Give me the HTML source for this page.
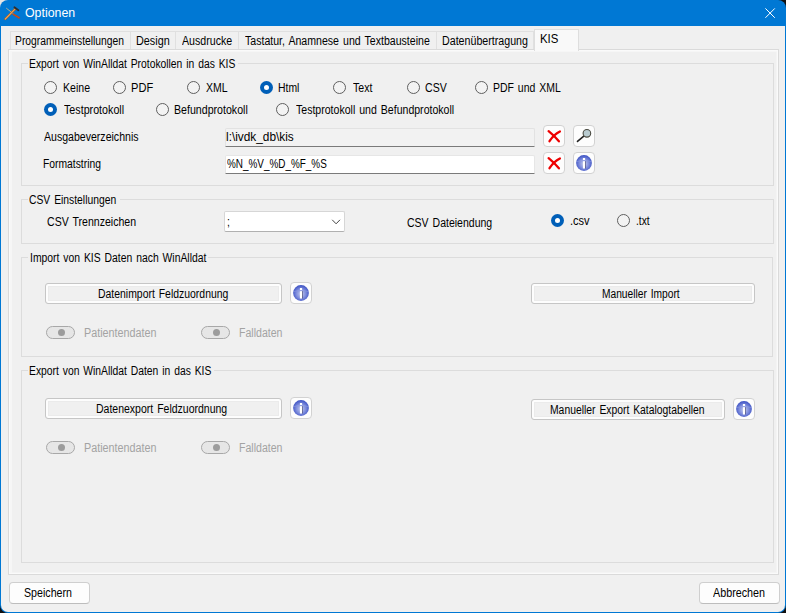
<!DOCTYPE html>
<html><head><meta charset="utf-8">
<style>
*{box-sizing:border-box;margin:0;padding:0}
html,body{width:786px;height:613px;overflow:hidden;background:#111}
body{position:relative;font-family:"Liberation Sans",sans-serif;font-size:12px;color:#000}
.a{position:absolute}
#win{left:0;top:0;width:786px;height:613px;background:#0078d4;border-radius:8px;overflow:hidden}
#client{left:1px;top:26px;width:784px;height:586px;background:#f0f0f0;border-radius:0 0 7px 7px}
.t{position:absolute;white-space:nowrap;line-height:14px;font-size:12px;word-spacing:1.2px;transform-origin:0 0}
.dis{color:#a3a3a3}
.w{color:#fff}
.gb{position:absolute;border:1px solid #dcdcdc}
.lg{position:absolute;background:#f0f0f0;height:3px}
.r{position:absolute;width:13px;height:13px;border-radius:50%;border:1px solid #5f5f5f;background:#f3f3f3}
.rc{position:absolute;width:13px;height:13px;border-radius:50%;background:#005fb8}
.rc:after{content:"";position:absolute;left:4px;top:4px;width:5px;height:5px;border-radius:50%;background:#fff}
.btn{position:absolute;border:1px solid #c6c6c6;border-radius:3px;background:#f0f0f0;box-shadow:inset 0 0 0 2px #fdfdfd, inset 0 0 0 3px #ebebeb}
.ib{position:absolute;width:22px;height:22px;border:1px solid #d2d2d2;border-radius:4px;background:#fdfdfd}
.ib svg{position:absolute;left:-1px;top:-1px}
.pb{position:absolute;border:1px solid #cfcfcf;border-radius:4px;background:#fdfdfd;border-bottom-color:#bdbdbd}
.tg{position:absolute;width:29px;height:13px;border:1px solid #a8a8a8;border-radius:7px;background:#e6e6e6}
.tg:after{content:"";position:absolute;left:11px;top:2px;width:7px;height:7px;border-radius:50%;background:#9c9c9c}
.tab{position:absolute;top:31px;height:19px;border:1px solid #e0e0e0;border-bottom:none;background:#f0f0f0}
</style></head><body>
<div class="a" style="left:0;top:0;width:12px;height:12px;background:#e6e6e6"></div>
<div id="win" class="a">
<svg class="a" style="left:4px;top:6px" width="17" height="15" viewBox="0 0 17 15">
  <line x1="2.2" y1="2.1" x2="9.6" y2="7.9" stroke="#c2b48f" stroke-width="0.9"/>
  <path d="M9.2 7.6L15.8 11.4L15.2 12.6L8.6 8.6Z" fill="#e0500e" stroke="#c04008" stroke-width="0.5" stroke-linejoin="round"/>
  <line x1="1.3" y1="13" x2="11" y2="3.2" stroke="#9a5a20" stroke-width="2.3" stroke-linecap="round"/>
  <line x1="1.3" y1="13" x2="11" y2="3.2" stroke="#eda35a" stroke-width="1.2" stroke-linecap="round"/>
  <line x1="10.4" y1="1.2" x2="14.4" y2="4.2" stroke="#2e2e2e" stroke-width="1.8" stroke-linecap="round"/>
</svg>
<svg class="a" style="left:765px;top:8px" width="11" height="11" viewBox="0 0 11 11">
  <path d="M0.4 0.4L9.8 9.8M9.8 0.4L0.4 9.8" stroke="#fff" stroke-width="1"/>
</svg>
<div id="client" class="a"></div>

<!-- tabs -->
<div class="tab" style="left:10px;width:121px"></div>
<div class="tab" style="left:130px;width:46px"></div>
<div class="tab" style="left:175px;width:64px"></div>
<div class="tab" style="left:238px;width:199px"></div>
<div class="tab" style="left:436px;width:98px"></div>
<div class="a" style="left:8px;top:49px;width:771px;height:526px;border:1px solid #dadada;background:#f0f0f0;box-shadow:inset 1px 1px 0 #fafafa, inset -1px -1px 0 #fafafa, inset 3px 2px 0 #f6f6f6, inset -2px -2px 0 #f4f4f4"></div>
<div class="a" style="left:534px;top:29px;width:45px;height:22px;border:1px solid #dedede;border-bottom:none;background:#f9f9f9"></div>

<!-- group 1 -->
<div class="gb" style="left:21px;top:63px;width:753px;height:123px"></div>
<div class="lg" style="left:28px;top:62px;width:210px"></div>
<div class="r" style="left:44px;top:81px"></div>
<div class="r" style="left:113px;top:81px"></div>
<div class="r" style="left:187px;top:81px"></div>
<div class="rc" style="left:260px;top:81px"></div>
<div class="r" style="left:333px;top:81px"></div>
<div class="r" style="left:407px;top:81px"></div>
<div class="r" style="left:475px;top:81px"></div>
<div class="rc" style="left:44px;top:103px"></div>
<div class="r" style="left:156px;top:103px"></div>
<div class="r" style="left:276px;top:103px"></div>

<div class="a" style="left:225px;top:128px;width:310px;height:19px;background:#f2f2f2;border:1px solid #e2e2e2;border-bottom:1px solid #7a7a7a;border-radius:2px 2px 0 0"></div>
<div class="a" style="left:225px;top:155px;width:310px;height:19px;background:#fff;border:1px solid #e6e6e6;border-bottom:1px solid #7a7a7a;border-radius:2px 2px 0 0"></div>

<div class="ib" style="left:543px;top:125px"><svg width="22" height="22" viewBox="0 0 22 22"><path d="M5.6 6.2Q11 10.5 15.9 16.3" fill="none" stroke="#ee0000" stroke-width="2.3" stroke-linecap="round"/><path d="M16.9 6.5Q10.8 9.5 6.5 16.2" fill="none" stroke="#ee0000" stroke-width="2.3" stroke-linecap="round"/></svg></div>
<div class="ib" style="left:573px;top:125px"><svg width="22" height="22" viewBox="0 0 22 22"><path d="M4.5 16.4L10.8 11.2" stroke="#222" stroke-width="1.6" stroke-linecap="round"/><circle cx="13.9" cy="8.3" r="3.8" fill="#b9cbd0" stroke="#4a4a40" stroke-width="1.1"/></svg></div>
<div class="ib" style="left:543px;top:152px"><svg width="22" height="22" viewBox="0 0 22 22"><path d="M5.6 6.2Q11 10.5 15.9 16.3" fill="none" stroke="#ee0000" stroke-width="2.3" stroke-linecap="round"/><path d="M16.9 6.5Q10.8 9.5 6.5 16.2" fill="none" stroke="#ee0000" stroke-width="2.3" stroke-linecap="round"/></svg></div>
<div class="ib" style="left:573px;top:152px"><svg width="22" height="22" viewBox="0 0 22 22"><use href="#info"/></svg></div>

<!-- group 2 -->
<div class="gb" style="left:21px;top:199px;width:753px;height:45px"></div>
<div class="lg" style="left:28px;top:198px;width:92px"></div>
<div class="a" style="left:224px;top:211px;width:121px;height:21px;background:#fff;border:1px solid #d6d6d6;border-bottom-color:#b0b0b0;border-radius:2px"></div>
<svg class="a" style="left:331px;top:218px" width="11" height="7" viewBox="0 0 11 7"><path d="M1.2 1.8L5.1 5.8L9.0 1.8" fill="none" stroke="#444" stroke-width="1"/></svg>
<div class="rc" style="left:551px;top:214px"></div>
<div class="r" style="left:617px;top:214px"></div>

<!-- group 3 -->
<div class="gb" style="left:21px;top:257px;width:752px;height:100px"></div>
<div class="lg" style="left:28px;top:256px;width:180px"></div>
<div class="btn" style="left:45px;top:283px;width:237px;height:21px"></div>
<div class="ib" style="left:290px;top:282px"><svg width="22" height="22" viewBox="0 0 22 22"><use href="#info"/></svg></div>
<div class="btn" style="left:531px;top:283px;width:224px;height:21px"></div>
<div class="tg" style="left:46px;top:326px"></div>
<div class="tg" style="left:201px;top:326px"></div>

<!-- group 4 -->
<div class="gb" style="left:21px;top:370px;width:753px;height:193px"></div>
<div class="lg" style="left:28px;top:369px;width:186px"></div>
<div class="btn" style="left:45px;top:398px;width:237px;height:21px"></div>
<div class="ib" style="left:290px;top:397px"><svg width="22" height="22" viewBox="0 0 22 22"><use href="#info"/></svg></div>
<div class="btn" style="left:531px;top:399px;width:194px;height:21px"></div>
<div class="ib" style="left:733px;top:398px"><svg width="22" height="22" viewBox="0 0 22 22"><use href="#info"/></svg></div>
<div class="tg" style="left:46px;top:441px"></div>
<div class="tg" style="left:201px;top:441px"></div>

<!-- bottom buttons -->
<div class="pb" style="left:9px;top:582px;width:81px;height:22px"></div>
<div class="pb" style="left:699px;top:582px;width:81px;height:22px"></div>
<div class="t w" style="left:24.94px;top:6px;transform:scaleX(1.0292)">Optionen</div>
<div class="t" style="left:15.44px;top:34px;transform:scaleX(0.8608)">Programmeinstellungen</div>
<div class="t" style="left:136.06px;top:34px;transform:scaleX(0.9026)">Design</div>
<div class="t" style="left:181.70px;top:34px;transform:scaleX(0.8859)">Ausdrucke</div>
<div class="t" style="left:245.38px;top:34px;transform:scaleX(0.8819)">Tastatur, Anamnese und Textbausteine</div>
<div class="t" style="left:442.44px;top:34px;transform:scaleX(0.8884)">Datenübertragung</div>
<div class="t" style="left:539.58px;top:32px;transform:scaleX(0.9520)">KIS</div>
<div class="t" style="left:29.44px;top:57px;transform:scaleX(0.8598)">Export von WinAlldat Protokollen in das KIS</div>
<div class="t" style="left:62.72px;top:81px;transform:scaleX(0.8806)">Keine</div>
<div class="t" style="left:131.06px;top:81px;transform:scaleX(0.9228)">PDF</div>
<div class="t" style="left:206.46px;top:81px;transform:scaleX(0.8740)">XML</div>
<div class="t" style="left:278.06px;top:81px;transform:scaleX(0.8660)">Html</div>
<div class="t" style="left:352.66px;top:81px;transform:scaleX(0.8811)">Text</div>
<div class="t" style="left:425.44px;top:81px;transform:scaleX(0.8810)">CSV</div>
<div class="t" style="left:493.06px;top:81px;transform:scaleX(0.8716)">PDF und XML</div>
<div class="t" style="left:63.60px;top:103px;transform:scaleX(0.8920)">Testprotokoll</div>
<div class="t" style="left:174.44px;top:103px;transform:scaleX(0.8849)">Befundprotokoll</div>
<div class="t" style="left:295.70px;top:103px;transform:scaleX(0.8793)">Testprotokoll und Befundprotokoll</div>
<div class="t" style="left:43.70px;top:130px;transform:scaleX(0.8800)">Ausgabeverzeichnis</div>
<div class="t" style="left:43.00px;top:157px;transform:scaleX(0.8606)">Formatstring</div>
<div class="t" style="left:226.06px;top:130px;transform:scaleX(0.9864)">l:\ivdk_db\kis</div>
<div class="t" style="left:226.70px;top:157px;transform:scaleX(0.8266)">%N_%V_%D_%F_%S</div>
<div class="t" style="left:29.14px;top:193px;transform:scaleX(0.8610)">CSV Einstellungen</div>
<div class="t" style="left:46.66px;top:215px;transform:scaleX(0.8801)">CSV Trennzeichen</div>
<div class="t" style="left:227.00px;top:215px;transform:scaleX(0.8800)">;</div>
<div class="t" style="left:406.66px;top:216px;transform:scaleX(0.8759)">CSV Dateiendung</div>
<div class="t" style="left:569.50px;top:214px;transform:scaleX(0.9200)">.csv</div>
<div class="t" style="left:635.50px;top:214px;transform:scaleX(0.8545)">.txt</div>
<div class="t" style="left:29.56px;top:251px;transform:scaleX(0.8642)">Import von KIS Daten nach WinAlldat</div>
<div class="t" style="left:97.56px;top:287px;transform:scaleX(0.8692)">Datenimport Feldzuordnung</div>
<div class="t" style="left:602.38px;top:287px;transform:scaleX(0.8514)">Manueller Import</div>
<div class="t dis" style="left:84.44px;top:326px;transform:scaleX(0.8984)">Patientendaten</div>
<div class="t dis" style="left:239.12px;top:326px;transform:scaleX(0.8800)">Falldaten</div>
<div class="t" style="left:29.44px;top:364px;transform:scaleX(0.8602)">Export von WinAlldat Daten in das KIS</div>
<div class="t" style="left:96.28px;top:402px;transform:scaleX(0.8746)">Datenexport Feldzuordnung</div>
<div class="t" style="left:549.56px;top:403px;transform:scaleX(0.8628)">Manueller Export Katalogtabellen</div>
<div class="t dis" style="left:84.44px;top:441px;transform:scaleX(0.8984)">Patientendaten</div>
<div class="t dis" style="left:239.12px;top:441px;transform:scaleX(0.8800)">Falldaten</div>
<div class="t" style="left:24.44px;top:586px;transform:scaleX(0.8878)">Speichern</div>
<div class="t" style="left:713.46px;top:586px;transform:scaleX(0.8967)">Abbrechen</div>
</div>
<svg width="0" height="0" style="position:absolute">
<defs>
<radialGradient id="ig" cx="0.5" cy="0.55" r="0.55">
<stop offset="0" stop-color="#c4cbee"/><stop offset="0.55" stop-color="#7d8cdc"/><stop offset="1" stop-color="#3c51c4"/>
</radialGradient>
<g id="info">
<circle cx="11" cy="11" r="7.9" fill="url(#ig)"/>
<path d="M3.6 9.6Q11 6.6 18.4 9.6" fill="none" stroke="#9aa6e4" stroke-width="0.8" opacity="0.6"/>
<rect x="9.9" y="6" width="2.2" height="2" fill="#fff"/>
<rect x="9.9" y="9.2" width="2.2" height="7.3" fill="#fff"/>
<rect x="12.1" y="9.2" width="0.8" height="7.3" fill="#3a3a60" opacity="0.7"/>
</g>
</defs>
</svg>
</body></html>
